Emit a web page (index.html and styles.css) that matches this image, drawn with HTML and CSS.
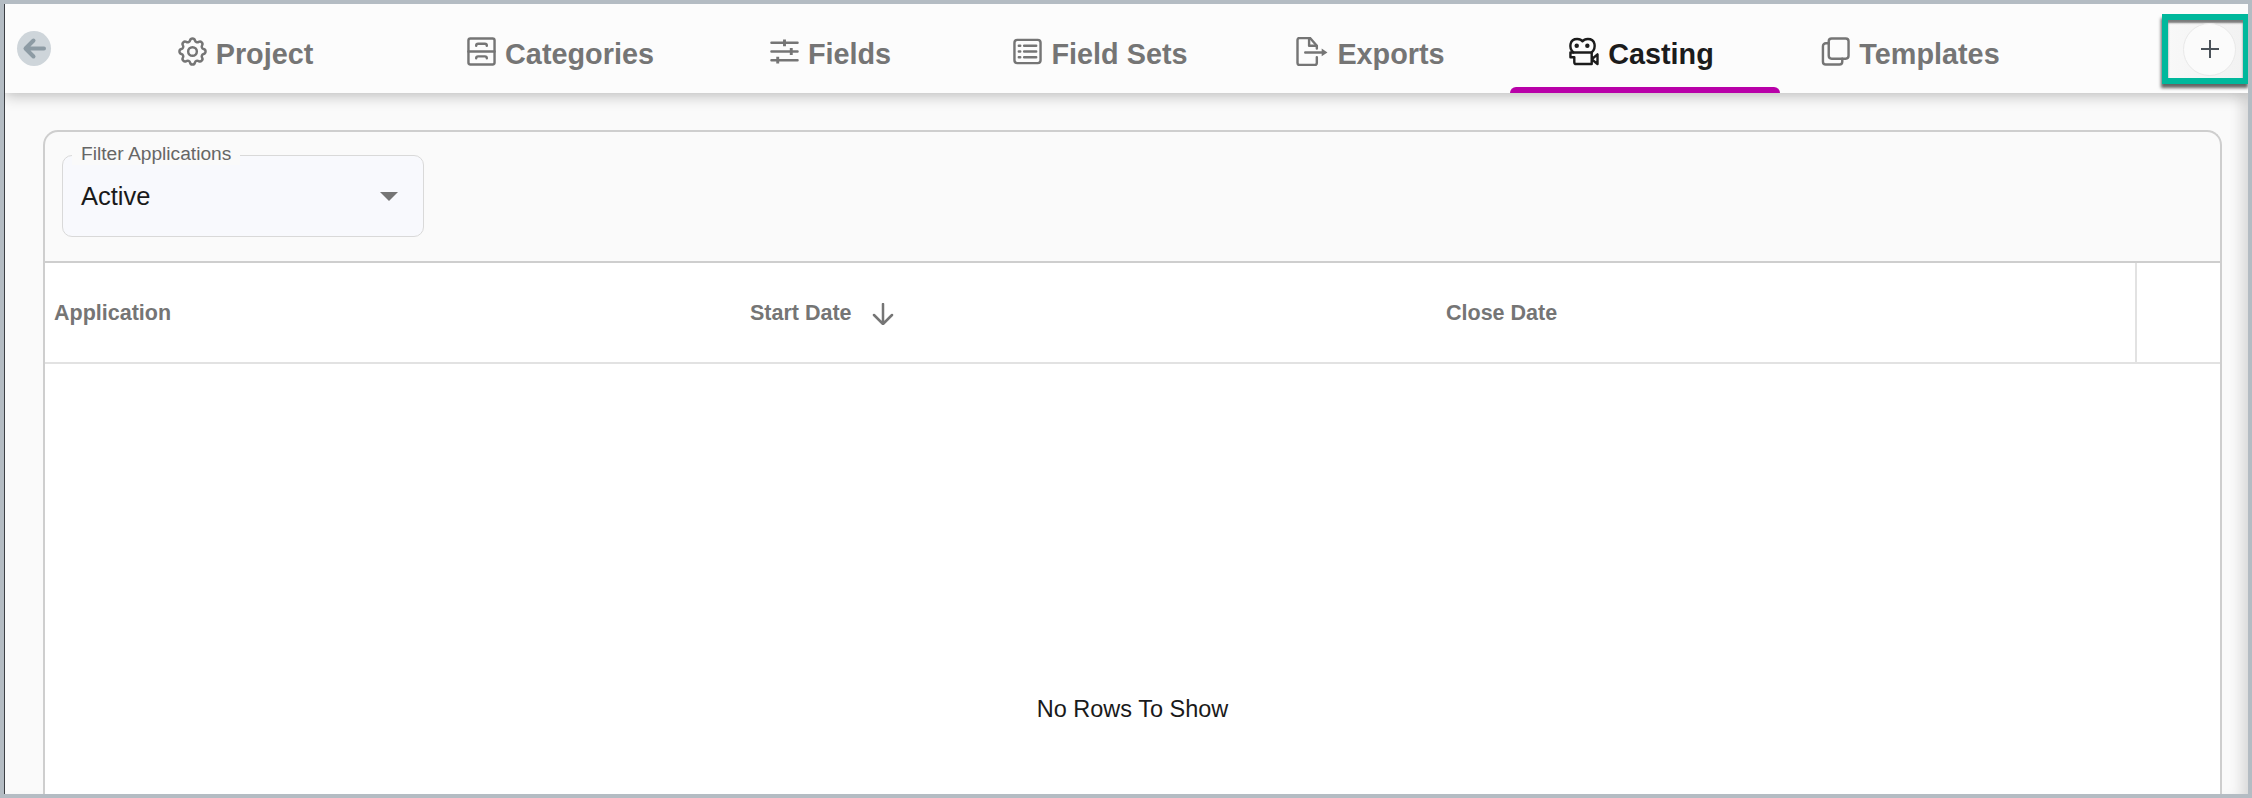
FILE: index.html
```html
<!DOCTYPE html>
<html lang="en">
<head>
<meta charset="utf-8">
<title>Casting</title>
<link rel="stylesheet" href="styles.css">
</head>
<body>
<div class="app">
  <header class="nav">
    <button class="back" aria-label="Back">
      <svg viewBox="0 0 34 35" width="34" height="35"><path d="M27 17.500H9M16.500 9.500 8.500 17.500l8 8"/></svg>
    </button>
    <nav class="tabs">
      <a class="tab tab-first">
        <svg class="icon icon-gear" viewBox="2 2 20 20"><path d="M10.325 4.317c.426-1.756 2.924-1.756 3.35 0a1.724 1.724 0 0 0 2.573 1.066c1.543-.94 3.31.826 2.37 2.37a1.724 1.724 0 0 0 1.065 2.572c1.756.426 1.756 2.924 0 3.35a1.724 1.724 0 0 0-1.066 2.573c.94 1.543-.826 3.31-2.37 2.37a1.724 1.724 0 0 0-2.572 1.065c-.426 1.756-2.924 1.756-3.35 0a1.724 1.724 0 0 0-2.573-1.066c-1.543.94-3.31-.826-2.37-2.37a1.724 1.724 0 0 0-1.065-2.572c-1.756-.426-1.756-2.924 0-3.35a1.724 1.724 0 0 0 1.066-2.573c-.94-1.543.826-3.31 2.37-2.37 1 .608 2.296.07 2.572-1.065z"/><circle cx="12" cy="12" r="3"/></svg>
        <span>Project</span>
      </a>
      <a class="tab">
        <svg class="icon" viewBox="0 0 30 30"><rect x="1.500" y="1.500" width="27" height="27" rx="2"/><path d="M1.500 15h27M9.500 9c0-1.500 1-2 2-2h7c1 0 2 .5 2 2M9.500 22c0-1.500 1-2 2-2h7c1 0 2 .5 2 2"/></svg>
        <span>Categories</span>
      </a>
      <a class="tab">
        <svg class="icon" viewBox="0 0 30 30"><path d="M1.500 6h27M1.500 15h27M1.500 24h27"/><path class="solid" d="M13.500 2.500h3v7h-3zM20.500 11.500h3v7h-3zM6.500 20.500h3v7h-3z"/></svg>
        <span>Fields</span>
      </a>
      <a class="tab">
        <svg class="icon" viewBox="0 0 30 30"><rect x="1.500" y="3" width="27" height="24" rx="3"/><path d="M11.500 9h12.500M11.500 15h12.500M11.500 21h12.500M6 9h1.500M6 15h1.500M6 21h1.500"/></svg>
        <span>Field Sets</span>
      </a>
      <a class="tab">
        <svg class="icon icon-wide" viewBox="0 0 32 30"><path d="M21 21V27a2 2 0 0 1-2 2H3a2 2 0 0 1-2-2V3a2 2 0 0 1 2-2h11l7 8v3"/><path d="M13 1.500V9h7.500M9 16h18"/><path class="solid" d="M26 12l6 4-6 4z"/></svg>
        <span>Exports</span>
      </a>
      <a class="tab tab-active">
        <svg class="icon icon-wide" viewBox="0 0 32 30"><path d="M6 16C1 11 2 2 10 2c3 0 4.500 1 5.500 2.500C16.500 3 18.500 2 21 2c8 0 9 9 4 14"/><path d="M3 16H25V28H9a2 2 0 0 1-2-2V21H3ZM25 23l6-5V28Z"/><circle class="solid" cx="9.500" cy="9" r="2.300"/><circle class="solid" cx="20.500" cy="9" r="2.300"/></svg>
        <span>Casting</span>
      </a>
      <a class="tab">
        <svg class="icon" viewBox="0 0 30 30"><rect x="8" y="1.500" width="20.500" height="21" rx="3"/><path d="M8 6.500H5a3 3 0 0 0-3 3V25.500a3 3 0 0 0 3 3H19a3 3 0 0 0 3-3v-3"/></svg>
        <span>Templates</span>
      </a>
    </nav>
    <div class="add-mark">
      <button class="add" aria-label="Add">
        <svg viewBox="0 0 20 20" width="20" height="20"><path d="M10 1v18M1 10h18"/></svg>
      </button>
    </div>
  </header>
  <main class="content">
    <section class="card">
      <div class="toolbar">
        <div class="select">
          <span class="select-label">Filter Applications</span>
          <span class="select-value">Active</span>
          <span class="caret"></span>
        </div>
      </div>
      <div class="thead">
        <div class="th">Application</div>
        <div class="th">Start Date
          <svg class="sort" viewBox="0 0 22 22" width="22" height="22"><path d="M11 1v19M2 12l9 9 9-9"/></svg>
        </div>
        <div class="th">Close Date</div>
        <div class="th th-end"></div>
      </div>
      <div class="tbody">No Rows To Show</div>
    </section>
  </main>
</div>
</body>
</html>
```

FILE: styles.css
```css
* { box-sizing: border-box; }
html, body { margin: 0; height: 100%; }
body {
  width: 2252px;
  height: 798px;
  padding: 4px 4px 4px 4px;
  background: #b4bcc3;
  font-family: "Liberation Sans", Arial, sans-serif;
  overflow: hidden;
}
.app {
  height: 790px;
  border-left: 1px solid #3c3f44;
  background: #fafafa;
  display: flex;
  flex-direction: column;
  overflow: hidden;
}
.nav {
  position: relative;
  z-index: 2;
  flex: 0 0 89px;
  display: flex;
  align-items: flex-start;
  background: #fcfcfc;
  box-shadow: 0 3px 14px rgba(0, 0, 0, .24);
}
.back {
  flex: none;
  width: 34px;
  height: 35px;
  margin: 27px 0 0 12px;
  padding: 0;
  border: 0;
  border-radius: 50%;
  background: #ced5da;
  display: block;
}
.back svg { display: block; fill: none; stroke: #8d9ba4; stroke-width: 4; stroke-linecap: round; stroke-linejoin: round; }
.tabs {
  display: flex;
  margin-left: 64px;
  height: 89px;
}
.tab {
  position: relative;
  width: 270px;
  padding: 33px 9px 0 0;
  display: flex;
  justify-content: center;
  align-items: flex-start;
  gap: 9px;
  color: #757575;
  font-size: 28.800px;
  font-weight: 700;
  line-height: 34px;
}
.tab-first { margin-right: 45px; }
.tab-active { color: #1c1c1c; }
.tab-active::after {
  content: "";
  position: absolute;
  left: 0;
  right: 0;
  bottom: 0;
  height: 6px;
  background: #b800a8;
  border-radius: 6px 6px 0 0;
}
.icon {
  flex: none;
  width: 29px;
  height: 29px;
  fill: none;
  stroke: currentColor;
  stroke-width: 2.500;
  stroke-linecap: round;
  stroke-linejoin: round;
}
.icon .solid { fill: currentColor; stroke: none; }
.icon-gear { stroke-width: 1.700; }
.icon-wide { width: 32px; }
.add-mark {
  position: absolute;
  left: 2157px;
  top: 10px;
  width: 87px;
  height: 70px;
  border: 6px solid #00b89c;
  display: flex;
  align-items: center;
  justify-content: flex-end;
  padding-right: 7px;
  box-shadow: -1px 4px 3px rgba(0, 0, 0, .6), inset 0 3px 2px rgba(0, 0, 0, .5);
  background: linear-gradient(90deg, #f8f8f8, #f2f2f2);
}
.add {
  width: 53px;
  height: 53px;
  padding: 0;
  border: 1px solid #e9e9e9;
  border-radius: 50%;
  background: #fbfbfb;
  display: flex;
  align-items: center;
  justify-content: center;
}
.add svg { fill: none; stroke: #4b5259; stroke-width: 2; display: block; }
.content {
  flex: 1;
  padding: 37px 26px 0 38px;
  box-shadow: inset -14px 0 14px -8px rgba(0, 0, 0, .14);
  min-height: 0;
}
.card {
  height: 100%;
  border: 2px solid #cecece;
  border-bottom: 0;
  border-radius: 15px 15px 0 0;
  background: #fafafa;
  display: flex;
  flex-direction: column;
}
.toolbar {
  flex: 0 0 131px;
  padding: 23px 0 0 17px;
  border-bottom: 2px solid #cecece;
}
.select {
  position: relative;
  width: 362px;
  height: 82px;
  border: 1px solid #d9d9d9;
  border-radius: 10px;
  background: #f8f9fd;
}
.select-label {
  position: absolute;
  left: 9px;
  top: -13px;
  padding: 0 9px;
  background: #fafafa;
  color: #666;
  font-size: 19.200px;
  line-height: 22px;
}
.select-value {
  position: absolute;
  left: 18px;
  top: 25px;
  color: #1a1a1a;
  font-size: 25.500px;
  line-height: 30px;
}
.caret {
  position: absolute;
  left: 317px;
  top: 36px;
  border-left: 9px solid transparent;
  border-right: 9px solid transparent;
  border-top: 9px solid #757575;
}
.thead {
  flex: 0 0 101px;
  display: grid;
  grid-template-columns: 696px 696px 696px 1fr;
  background: #fff;
  border-bottom: 2px solid #e2e2e2;
}
.th {
  display: flex;
  align-items: center;
  gap: 20px;
  padding: 2px 0 0 9px;
  color: #757575;
  font-size: 21.500px;
  font-weight: 700;
}
.th-end { border-left: 2px solid #e2e2e2; margin-left: 2px; }
.sort { fill: none; stroke: #757575; stroke-width: 2.500; stroke-linecap: round; stroke-linejoin: round; }
.tbody {
  flex: 1;
  background: #fff;
  padding-top: 331px;
  text-align: center;
  color: #1a1a1a;
  font-size: 23.500px;
  line-height: 28px;
}
```
